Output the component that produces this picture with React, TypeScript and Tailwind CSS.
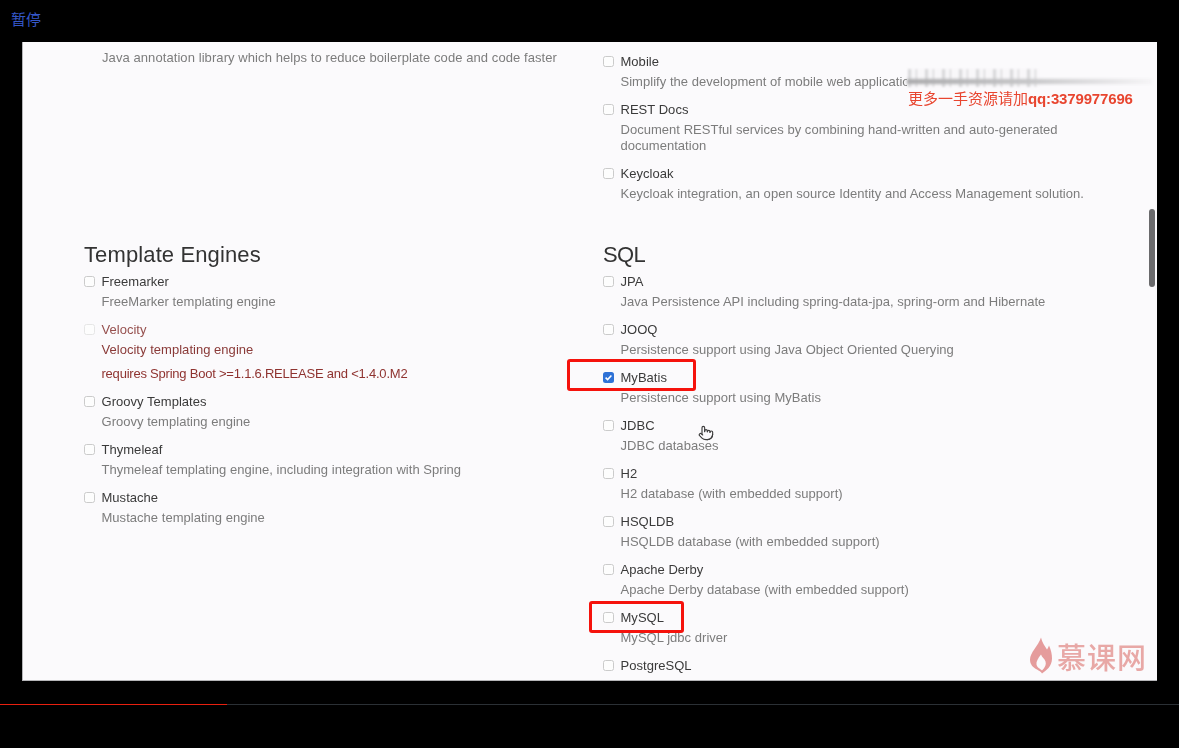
import { Pointer } from "lucide-react";

type Item = {
  name: string;
  desc: string;
  checked?: boolean;
  note?: string;
  mark?: string;
};

const topRight: Item[] = [
  { name: "Mobile", desc: "Simplify the development of mobile web applications" },
  {
    name: "REST Docs",
    desc: "Document RESTful services by combining hand-written and auto-generated documentation",
  },
  { name: "Keycloak", desc: "Keycloak integration, an open source Identity and Access Management solution." },
];

const templateEngines: Item[] = [
  { name: "Freemarker", desc: "FreeMarker templating engine" },
  {
    name: "Velocity",
    desc: "Velocity templating engine",
    note: "requires Spring Boot >=1.1.6.RELEASE and <1.4.0.M2",
  },
  { name: "Groovy Templates", desc: "Groovy templating engine" },
  { name: "Thymeleaf", desc: "Thymeleaf templating engine, including integration with Spring" },
  { name: "Mustache", desc: "Mustache templating engine" },
];

const sql: Item[] = [
  { name: "JPA", desc: "Java Persistence API including spring-data-jpa, spring-orm and Hibernate" },
  { name: "JOOQ", desc: "Persistence support using Java Object Oriented Querying" },
  {
    name: "MyBatis",
    desc: "Persistence support using MyBatis",
    checked: true,
    mark: "-left-[36px] -top-[10px] w-[129px]",
  },
  { name: "JDBC", desc: "JDBC databases" },
  { name: "H2", desc: "H2 database (with embedded support)" },
  { name: "HSQLDB", desc: "HSQLDB database (with embedded support)" },
  { name: "Apache Derby", desc: "Apache Derby database (with embedded support)" },
  { name: "MySQL", desc: "MySQL jdbc driver", mark: "-left-[14px] -top-[8px] w-[95px]" },
  { name: "PostgreSQL", desc: "PostgreSQL jdbc driver" },
];

const Dependency = ({ item }: { item: Item }) => {
  const warn = !!item.note;
  return (
    <div className="relative mb-[11px] flex gap-[6.5px]">
      {item.mark && (
        <div className={`absolute h-[32px] rounded-[3px] border-[3px] border-[#f5120c] ${item.mark}`} />
      )}
      {item.checked ? (
        <div className="mt-[3px] flex h-[11px] w-[11px] shrink-0 items-center justify-center rounded-[2.5px] bg-[#2f72d6]">
          <svg width="9" height="9" viewBox="0 0 9 9" fill="none">
            <path d="M1.6 4.6 L3.6 6.6 L7.4 2.4" stroke="#fff" strokeWidth="1.5" />
          </svg>
        </div>
      ) : (
        <div
          className={`mt-[3px] h-[11px] w-[11px] shrink-0 rounded-[2.5px] border ${
            warn ? "border-[#e6e6e6]" : "border-[#cbcbcb]"
          } bg-[#fdfdfd]`}
        />
      )}
      <div className="min-w-0 flex-1">
        <div className={`h-4 leading-[18px] ${warn ? "text-[#96504e]" : "text-[#3a3a3a]"}`}>{item.name}</div>
        <div className={`mt-[5px] leading-4 ${warn ? "text-[#8a3a38]" : "text-[#7c7c7c]"}`}>{item.desc}</div>
        {item.note && <div className="mt-2 leading-4 tracking-[-0.22px] text-[#8f3330]">{item.note}</div>}
      </div>
    </div>
  );
};

const App = () => {
  return (
    <div className="flex h-[748px] w-full flex-col overflow-hidden bg-black font-['Liberation_Sans','Noto_Sans_CJK_SC',sans-serif]">
      {/* PLAYER TOP */}
      <div className="flex h-[42px] shrink-0 items-center pb-px pl-[11px] text-[15px] text-[#3557c8]">暂停</div>

      {/* VIDEO FRAME */}
      <div className="relative ml-[22px] h-[639px] w-[1135px] shrink-0 overflow-hidden border-b border-l border-[#b5b5b8] bg-[#fbfafc] text-[13px] tracking-[0.03px] blur-[0.4px]">
        <div className="grid grid-cols-[519px_1fr] pl-[61px]">
          <div className="pt-[8px] pl-[18px] leading-4 tracking-[0.08px] text-[#7c7c7c]">
            Java annotation library which helps to reduce boilerplate code and code faster
          </div>
          <div className="w-[490px] pt-[11px]">
            {topRight.map((item) => (
              <Dependency key={item.name} item={item} />
            ))}
          </div>
        </div>

        <div className="mt-[27px] grid grid-cols-[519px_1fr] pl-[61px]">
          <div>
            <h2 className="mb-[3px] h-[30px] text-[22px] leading-[30px] font-normal tracking-[0.12px] text-[#333333]">
              Template Engines
            </h2>
            {templateEngines.map((item) => (
              <Dependency key={item.name} item={item} />
            ))}
          </div>
          <div>
            <h2 className="mb-[3px] h-[30px] text-[22px] leading-[30px] font-normal tracking-[-0.6px] text-[#333333]">
              SQL
            </h2>
            {sql.map((item) => (
              <Dependency key={item.name} item={item} />
            ))}
          </div>
        </div>

        {/* scrollbar */}
        <div className="absolute top-[167px] right-[2px] h-[78px] w-[6px] rounded-full bg-[#6a6a6c]" />

        {/* smeared ticker */}
        <div className="absolute top-[27px] left-[884px] h-[20px] w-[132px] bg-[#fbfafc]" />
        <div className="absolute top-[27px] left-[885px] h-[18px] w-[131px] bg-[repeating-linear-gradient(90deg,#d8d8da_0px,#d8d8da_3px,#f6f5f7_3px,#f6f5f7_8px,#cfcfd1_8px,#cfcfd1_9px,#f8f7f9_9px,#f8f7f9_17px)] blur-[0.8px]" />
        <div className="absolute top-[37px] left-[884px] h-[5px] w-[245px] bg-gradient-to-r from-[#a9a9ab] via-[#c4c4c6] to-[#f5f4f6] blur-[1.5px]" />

        {/* watermark */}
        <div className="absolute top-[48px] left-[885px] text-[15px] leading-[18px] tracking-normal whitespace-nowrap text-[#e8452f]">
          更多一手资源请加<span className="font-bold tracking-[-0.15px]">qq:3379977696</span>
        </div>

        {/* cursor */}
        <Pointer className="absolute top-[383px] left-[675px] text-[#3c3c3c]" size={16} strokeWidth={1.7} />

        {/* logo */}
        <div className="absolute top-[595px] left-[1007px] flex items-center gap-[5px] text-[#e8a8a6]">
          <svg width="22" height="37" viewBox="0 0 22 36" fill="none">
            <path
              fillRule="evenodd"
              clipRule="evenodd"
              d="M11 0 C12 5 15 9 17 12 C18 10.5 18.5 9.5 19 8 C21 12 22 17 22 21 C22 29 16 33 12 36 C11 34 9 33.5 7 32 C3 30 0 27 0 22 C0 15 8 9 11 0 Z M11 17 C8 21 6 24 6.5 27 C7 30 10 31 12 33 C15 30 16.5 27 15.5 24 C14.5 21 12 20 11 17 Z"
              fill="#e59c9c"
            />
          </svg>
          <span className="text-[29px] leading-[34px] font-medium tracking-[1px] font-['Noto_Sans_CJK_SC',sans-serif]">慕课网</span>
        </div>
      </div>

      {/* PROGRESS */}
      <div className="mt-[23px] flex h-px w-full shrink-0 bg-[#2b3035]">
        <div className="h-px w-[227px] bg-[#e8200f]" />
      </div>
    </div>
  );
};

export default App;
